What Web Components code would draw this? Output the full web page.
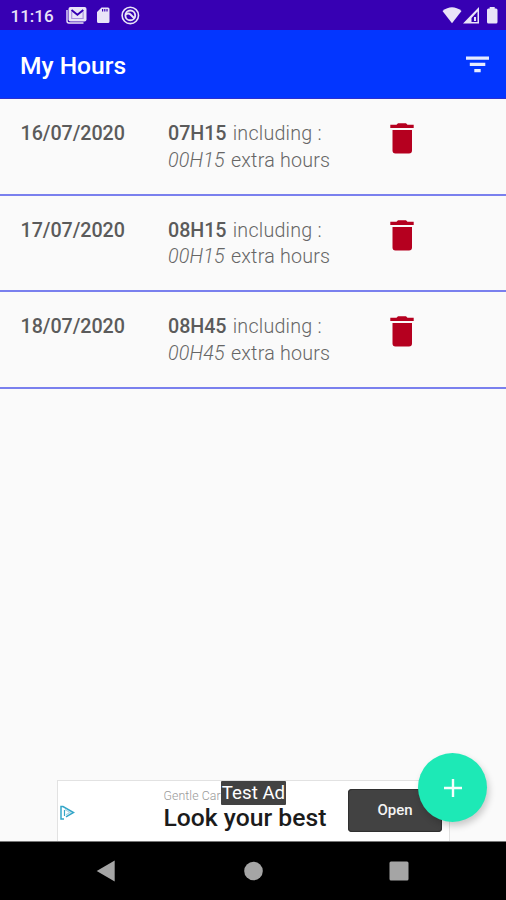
<!DOCTYPE html>
<html lang="en">
<head>
<meta charset="utf-8">
<title>My Hours</title>
<style>
body {
  margin: 0;
  font-family: Roboto, "Liberation Sans", sans-serif;
  --status-bg: #3700b3;
  --bar-bg: #0336ff;
  --page-bg: #fafafa;
  --line: #7a80ee;
  --danger: #b5001f;
  --accent: #1de9b6;
}
</style>
</head>
<body>
<c-screen>
  <c-status-bar slot="top">11:16</c-status-bar>
  <c-app-bar slot="top">My Hours</c-app-bar>
  <c-entry><span slot="date">16/07/2020</span><span slot="total">07H15</span><span slot="extra">00H15</span></c-entry>
  <c-entry><span slot="date">17/07/2020</span><span slot="total">08H15</span><span slot="extra">00H15</span></c-entry>
  <c-entry><span slot="date">18/07/2020</span><span slot="total">08H45</span><span slot="extra">00H45</span></c-entry>
  <c-ad slot="bottom">
    <span slot="brand">Gentle Care</span>
    <span slot="title">Look your best</span>
    <span slot="action">Open</span>
  </c-ad>
  <c-fab slot="bottom"></c-fab>
  <c-nav-bar slot="bottom"></c-nav-bar>
</c-screen>

<script>
function define(name, html) {
  const template = document.createElement("template");
  template.innerHTML = html;
  customElements.define(name, class extends HTMLElement {
    constructor() {
      super();
      this.attachShadow({ mode: "open" });
      this.shadowRoot.appendChild(template.content.cloneNode(true));
    }
  });
}

define("c-screen", `
<style>
:host {
  display: flex;
  flex-direction: column;
  position: relative;
  width: 506px;
  height: 900px;
  overflow: hidden;
  background: var(--page-bg);
}
main { flex: 1; }
</style>
<slot name="top"></slot>
<main><slot></slot></main>
<slot name="bottom"></slot>
`);

define("c-status-bar", `
<style>
:host {
  display: flex;
  justify-content: space-between;
  box-sizing: border-box;
  height: 30px;
  padding: 0 8px 0 10.5px;
  background: var(--status-bg);
  color: #e9e4f8;
}
.time {
  width: 55.5px;
  font-size: 17px;
  font-weight: 500;
  line-height: 32px;
}
.left { display: flex; }
svg { display: block; fill: currentColor; }
</style>
<div class="left">
  <div class="time"><slot></slot></div>
  <svg width="76" height="30" viewBox="66 0 76 30">
    <path d="M67 10v11q0 2 2 2h14.500" fill="none" stroke="currentColor" stroke-width="1.400"/>
    <rect x="68.500" y="7" width="18" height="14.500" rx="2"/>
    <path d="M71.500 10l5.900 4.800 5.900-4.800" fill="none" stroke="#3700b3" stroke-width="1.900"/>
    <path d="M71.700 11.500v7h11.400v-7" fill="none" stroke="#3700b3" stroke-opacity=".35" stroke-width="1.200"/>
    <path d="M101.500 7.500h6.500q1.500 0 1.500 1.500v12.500q0 1.500-1.500 1.500h-9.500q-1.500 0-1.500-1.500V12zM102 9v2.500h1.200V9zm2.200 0v2.500h1.200V9zm2.200 0v2.500h1.200V9z" fill-rule="evenodd"/>
    <g fill="none" stroke="currentColor">
      <circle cx="130.300" cy="15.400" r="8.200" stroke-width="1.600"/>
      <circle cx="130.300" cy="15.400" r="4.900" stroke-width="1.900"/>
      <path d="M125.500 14.500q3-2 5 0t4 4" stroke-width="1.900"/>
    </g>
  </svg>
</div>
<svg width="56" height="30" viewBox="442 0 56 30" fill="#fff">
  <path d="M442.500 11q9.500-7.500 19 0L452 23.200z"/>
  <path fill-rule="evenodd" d="M479 7v16.500h-16zm-1.500 4.500l-6 6.500v4h6z"/>
  <path d="M474 17h2v4h-2z"/>
  <path d="M489.700 7h5v1.500h1.300q1.500 0 1.500 1.500v12q0 1.500-1.500 1.500h-7.500q-1.500 0-1.500-1.500V10q0-1.500 1.500-1.500h1.200z"/>
</svg>
`);

define("c-app-bar", `
<style>
:host {
  display: flex;
  justify-content: space-between;
  align-items: center;
  box-sizing: border-box;
  height: 69px;
  padding: 0 17px 0 20px;
  border-bottom: 1px solid #2c2fd0;
  background: var(--bar-bg);
  color: #fff;
}
h1 {
  margin: 0;
  padding-top: 3px;
  font-size: 24.600px;
  font-weight: 500;
  line-height: 30px;
}
svg { display: block; margin-top: 1px; fill: #e6ebff; }
</style>
<h1><slot></slot></h1>
<svg width="23" height="17" viewBox="0 0 23 17">
  <path d="M0 .5h23v3.200H0zM3.800 6.800h15.500v3.200H3.800zM8.300 13h6.400v3.200H8.300z"/>
</svg>
`);

define("c-entry", `
<style>
:host {
  display: grid;
  grid-template-columns: 147.500px 221.500px auto;
  justify-content: start;
  box-sizing: border-box;
  height: 96.700px;
  padding: 22px 0 0 20.500px;
  border-bottom: 2px solid var(--line);
  color: #666;
  font-size: 19.700px;
  font-weight: 300;
  line-height: 26.600px;
  letter-spacing: 0.220px;
}
b { font-weight: 500; color: #5b5b5b; letter-spacing: -0.050px; }
div b { margin-right: 1.200px; }
i { font-weight: 300; letter-spacing: 0.200px; margin-right: 1px; }
svg { display: block; margin-top: 2px; fill: var(--danger); }
</style>
<b><slot name="date"></slot></b>
<div><b><slot name="total"></slot></b> including :<br><i><slot name="extra"></slot></i> extra hours</div>
<svg width="24" height="31" viewBox="0 0 24 31">
  <path d="M.300 1.700h6.200L8 .200h8l1.500 1.500h6.200v3.300H.300zM2.500 7H22v20.500q0 3-3 3H5.500q-3 0-3-3z"/>
</svg>
`);

define("c-ad", `
<style>
:host {
  display: flex;
  position: relative;
  box-sizing: border-box;
  width: 393px;
  height: 62px;
  margin-left: 57px;
  padding: 8px 7px 0 2px;
  border: 1px solid #e2e2e2;
  border-bottom-color: #aaa;
  background: #fff;
}
svg { display: block; margin-top: 16px; }
.text { width: 185px; margin-left: 88.500px; white-space: nowrap; }
.brand { font-size: 12.300px; line-height: 14px; color: #999; font-weight: 300; letter-spacing: 0.100px; }
.title { font-size: 24.700px; line-height: 30px; color: #1b1b1b; font-weight: 500; }
.button {
  flex: none;
  width: 94px;
  height: 43px;
  border-radius: 4px;
  background: #424242;
  box-shadow: inset 0 0 0 1px #303030;
  color: #f4f4f4;
  font-size: 15px;
  font-weight: 500;
  line-height: 43px;
  text-align: center;
}
.badge {
  position: absolute;
  top: 0;
  left: 163px;
  width: 65px;
  height: 24px;
  border-radius: 1px;
  background: #424242;
  color: #fff;
  font-size: 18.700px;
  line-height: 25px;
  text-align: center;
  white-space: nowrap;
}
</style>
<svg width="15" height="16" viewBox="0 0 15 16" fill="none" stroke="#34a6c8">
  <path d="M4 14H1V1.500h2L13.500 7.500 6 11.800" stroke-width="1.500"/>
  <path d="M4.500 5v6" stroke-width="1.200"/>
  <path d="M5 4.500l5 3-4 2.300" stroke="#a9d5e4" stroke-width="1.200"/>
</svg>
<div class="text">
  <div class="brand"><slot name="brand"></slot></div>
  <div class="title"><slot name="title"></slot></div>
</div>
<div class="button"><slot name="action"></slot></div>
<div class="badge">Test Ad</div>
`);

define("c-fab", `
<style>
:host {
  display: grid;
  place-items: center;
  position: absolute;
  right: 19px;
  bottom: 78px;
  width: 69px;
  height: 69px;
  border-radius: 50%;
  background: var(--accent);
  box-shadow: 2px 4px 7px rgba(0, 0, 0, 0.2);
}
svg { display: block; }
</style>
<svg width="18" height="18" viewBox="0 0 18 18">
  <path d="M9 0v18M0 9h18" stroke="#f4fffc" stroke-width="2.400"/>
</svg>
`);

define("c-nav-bar", `
<style>
:host {
  display: flex;
  align-items: center;
  justify-content: space-between;
  box-sizing: border-box;
  position: relative;
  height: 59px;
  padding: 0 97px 0 96px;
  border-top: 1px solid #777;
  background: #000;
  margin-top: -1px;
}
svg { display: block; fill: #a5a5a5; }
</style>
<svg width="20" height="22" viewBox="0 0 20 22"><path d="M18.700.500v21L.700 11z"/></svg>
<svg width="20" height="20" viewBox="0 0 20 20"><circle cx="10.500" cy="10" r="9.300"/></svg>
<svg width="20" height="20" viewBox="0 0 20 20"><rect x=".500" y=".500" width="19" height="19" rx="1.500"/></svg>
`);
</script>
</body>
</html>
